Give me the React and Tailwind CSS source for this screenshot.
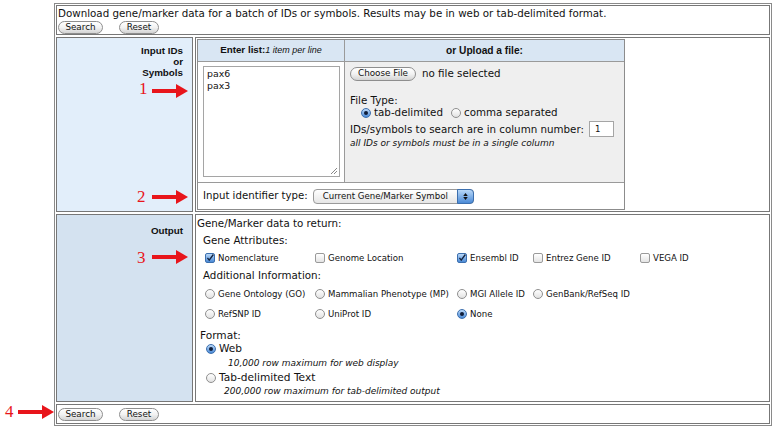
import React from "react";

const Btn = ({ children, className }) => (
  <span
    className={`inline-flex items-center justify-center h-[13px] rounded-full border border-[#8e8e8e] bg-gradient-to-b from-white via-[#f2f2f2] to-[#d4d4d4] text-[8.8px] leading-none text-[#111] ${className}`}
  >
    {children}
  </span>
);

const Check = ({ on }) =>
  on ? (
    <span className="inline-flex w-[10px] h-[10px] shrink-0 items-center justify-center rounded-[2px] border border-[#3c6fae] bg-gradient-to-b from-[#b9d8f8] to-[#4a8ad6]">
      <svg viewBox="0 0 10 10" className="w-[10px] h-[10px]">
        <path d="M1.8 4.8 L4 7.6 L9.2 0.6" fill="none" stroke="#13233f" strokeWidth="1.7" />
      </svg>
    </span>
  ) : (
    <span className="inline-block w-[10px] h-[10px] shrink-0 rounded-[2px] border border-[#9a9a9a] bg-gradient-to-b from-white to-[#e4e4e4]" />
  );

const Radio = ({ on }) =>
  on ? (
    <span className="inline-flex w-[10px] h-[10px] shrink-0 items-center justify-center rounded-full border border-[#3c6fae] bg-gradient-to-b from-[#bcd9f8] to-[#4a8ad6]">
      <span className="w-[4px] h-[4px] rounded-full bg-[#0f1d38]" />
    </span>
  ) : (
    <span className="inline-block w-[10px] h-[10px] shrink-0 rounded-full border border-[#8f8f8f] bg-gradient-to-b from-white to-[#e2e2e2]" />
  );

const Opt = ({ type, on, children }) => (
  <span className="flex items-center gap-[3px]">
    {type === "check" ? <Check on={on} /> : <Radio on={on} />}
    <span>{children}</span>
  </span>
);

const Arrow = ({ className }) => (
  <svg viewBox="0 0 36 14" className={`absolute w-[36px] h-[14px] ${className}`}>
    <rect x="0" y="5" width="25" height="4" fill="#e8151b" />
    <polygon points="24,0 36,7 24,14" fill="#e8151b" />
  </svg>
);

const Num = ({ children, className }) => (
  <span
    className={`absolute text-[17px] leading-[17px] text-[#e8151b] font-['Liberation_Serif',serif] ${className}`}
  >
    {children}
  </span>
);

export default function App() {
  return (
    <div className="relative w-[774px] h-[428px] bg-white overflow-hidden text-[#111] font-['DejaVu_Sans',sans-serif] text-[8.6px]">
      <div className="ml-[54px] mt-[3px] w-[718px] border border-[#8a8a8a] p-[1px] flex flex-col gap-[2px]">
        {/* intro row */}
        <div className="h-[30px] border border-[#777] px-[1px]">
          <div className="leading-[13px] pt-[1px] text-[10.3px]">
            Download gene/marker data for a batch of IDs or symbols. Results may be in web or tab-delimited format.
          </div>
          <div className="flex gap-[16px] mt-[1px]">
            <Btn className="w-[45px]">Search</Btn>
            <Btn className="w-[40px]">Reset</Btn>
          </div>
        </div>

        {/* input row */}
        <div className="h-[175px] flex gap-[2px]">
          <div className="w-[137px] border border-[#777] bg-[#e2eefa] pt-[7px] pr-[9px] text-right font-['Liberation_Sans',sans-serif] font-bold text-[9.8px] leading-[11px]">
            <div>Input IDs</div>
            <div>or</div>
            <div>Symbols</div>
          </div>
          <div className="flex-1 border border-[#777] p-[1px]">
            <div className="w-[428px] h-[171px] border border-[#8c8c8c] flex flex-col">
              <div className="h-[22px] flex border-b border-[#9a9a9a] bg-[#d9e6f3] font-['Liberation_Sans',sans-serif] text-[9.8px]">
                <div className="w-[147px] border-r border-[#9a9a9a] flex items-center justify-center">
                  <span className="font-bold">Enter list:</span>
                  <span className="italic text-[9px]">1 item per line</span>
                </div>
                <div className="flex-1 flex items-center justify-center font-bold text-[10.2px]">or Upload a file:</div>
              </div>
              <div className="h-[121px] flex border-b border-[#9a9a9a]">
                <div className="w-[147px] border-r border-[#9a9a9a] bg-white pl-[5px] pt-[4px]">
                  <div className="relative w-[137px] h-[111px] border border-[#a5a5a5] pl-[3px] pt-[1px] leading-[12px] text-[9.4px]">
                    <div>pax6</div>
                    <div>pax3</div>
                    <svg viewBox="0 0 8 8" className="absolute right-[1px] bottom-[1px] w-[8px] h-[8px]">
                      <path d="M7 1 L1 7 M7 4 L4 7" stroke="#888" strokeWidth="1" />
                    </svg>
                  </div>
                </div>
                <div className="flex-1 bg-[#efefef] pl-[5px] pt-[4px] text-[10.3px]">
                  <div className="flex items-center gap-[6px]">
                    <Btn className="w-[66px] h-[14px]">Choose File</Btn>
                    <span>no file selected</span>
                  </div>
                  <div className="mt-[13px] leading-[12px]">File Type:</div>
                  <div className="flex items-center gap-[8px] pl-[11px] h-[13px]">
                    <Opt on>tab-delimited</Opt>
                    <Opt>comma separated</Opt>
                  </div>
                  <div className="flex items-center gap-[5px] h-[16px] mt-[2px]">
                    <span>IDs/symbols to search are in column number:</span>
                    <span className="w-[25px] h-[16px] border border-[#a5a5a5] bg-white pl-[5px] leading-[14px] text-[8.6px]">1</span>
                  </div>
                  <div className="italic text-[9px] leading-[12px]">all IDs or symbols must be in a single column</div>
                </div>
              </div>
              <div className="flex-1 flex items-center pl-[5px] gap-[5px] bg-white">
                <span className="text-[10.2px]">Input identifier type:</span>
                <span className="relative flex items-center w-[161px] h-[15px] rounded-[4px] border border-[#9a9a9a] bg-gradient-to-b from-white to-[#e6e6e6] pl-[9px]">
                  Current Gene/Marker Symbol
                  <span className="absolute right-[-1px] top-[-1px] w-[17px] h-[15px] rounded-r-[4px] border border-[#3c6fae] bg-gradient-to-b from-[#b9d8f8] to-[#4a8ad6] flex flex-col items-center justify-center gap-[1px]">
                    <svg viewBox="0 0 6 4" className="w-[5px] h-[3px]">
                      <polygon points="3,0 6,4 0,4" fill="#111" />
                    </svg>
                    <svg viewBox="0 0 6 4" className="w-[5px] h-[3px]">
                      <polygon points="0,0 6,0 3,4" fill="#111" />
                    </svg>
                  </span>
                </span>
              </div>
            </div>
          </div>
        </div>

        {/* output row */}
        <div className="h-[188px] flex gap-[2px]">
          <div className="w-[137px] border border-[#777] bg-[#d4e2f0] pt-[10px] pr-[9px] text-right font-['Liberation_Sans',sans-serif] font-bold text-[9.8px] leading-[11px]">
            Output
          </div>
          <div className="flex-1 border border-[#777] bg-white">
            <div className="h-[17px] flex items-center pl-[1px] pt-[1px] text-[10.3px]">Gene/Marker data to return:</div>
            <div className="h-[18px] flex items-center pl-[7px] text-[10.3px]">Gene Attributes:</div>
            <div className="h-[17px] grid grid-cols-[110px_142px_76px_107px_1fr] items-center pl-[9px]">
              <Opt type="check" on>Nomenclature</Opt>
              <Opt type="check">Genome Location</Opt>
              <Opt type="check" on>Ensembl ID</Opt>
              <Opt type="check">Entrez Gene ID</Opt>
              <Opt type="check">VEGA ID</Opt>
            </div>
            <div className="h-[18px] flex items-center pl-[7px] text-[10.3px]">Additional Information:</div>
            <div className="h-[19px] grid grid-cols-[110px_142px_76px_107px_1fr] items-center pl-[9px]">
              <Opt>Gene Ontology (GO)</Opt>
              <Opt>Mammalian Phenotype (MP)</Opt>
              <Opt>MGI Allele ID</Opt>
              <Opt>GenBank/RefSeq ID</Opt>
            </div>
            <div className="h-[20px] grid grid-cols-[110px_142px_76px_107px_1fr] items-center pl-[9px]">
              <Opt>RefSNP ID</Opt>
              <Opt>UniProt ID</Opt>
              <Opt on>None</Opt>
            </div>
            <div className="h-[18px] flex items-end pl-[4px] text-[10.6px] leading-[13px]">Format:</div>
            <div className="h-[14px] flex items-center pl-[10px] text-[10.6px]">
              <Opt on>Web</Opt>
            </div>
            <div className="h-[15px] flex items-center pl-[32px] italic text-[9px]">10,000 row maximum for web display</div>
            <div className="h-[13px] flex items-center pl-[10px] text-[10.6px]">
              <Opt>Tab-delimited Text</Opt>
            </div>
            <div className="h-[16px] flex items-center pl-[28px] italic text-[9px]">200,000 row maximum for tab-delimited output</div>
          </div>
        </div>

        {/* bottom buttons */}
        <div className="h-[20px] border border-[#777] pl-[1px] flex items-center gap-[16px]">
          <Btn className="w-[45px]">Search</Btn>
          <Btn className="w-[40px]">Reset</Btn>
        </div>
      </div>

      <Num className="left-[139px] top-[80px]">1</Num>
      <Arrow className="left-[152px] top-[84px]" />
      <Num className="left-[137px] top-[188px]">2</Num>
      <Arrow className="left-[152px] top-[190px]" />
      <Num className="left-[137px] top-[249px]">3</Num>
      <Arrow className="left-[152px] top-[250px]" />
      <Num className="left-[5px] top-[403px]">4</Num>
      <Arrow className="left-[18px] top-[405px]" />
    </div>
  );
}
